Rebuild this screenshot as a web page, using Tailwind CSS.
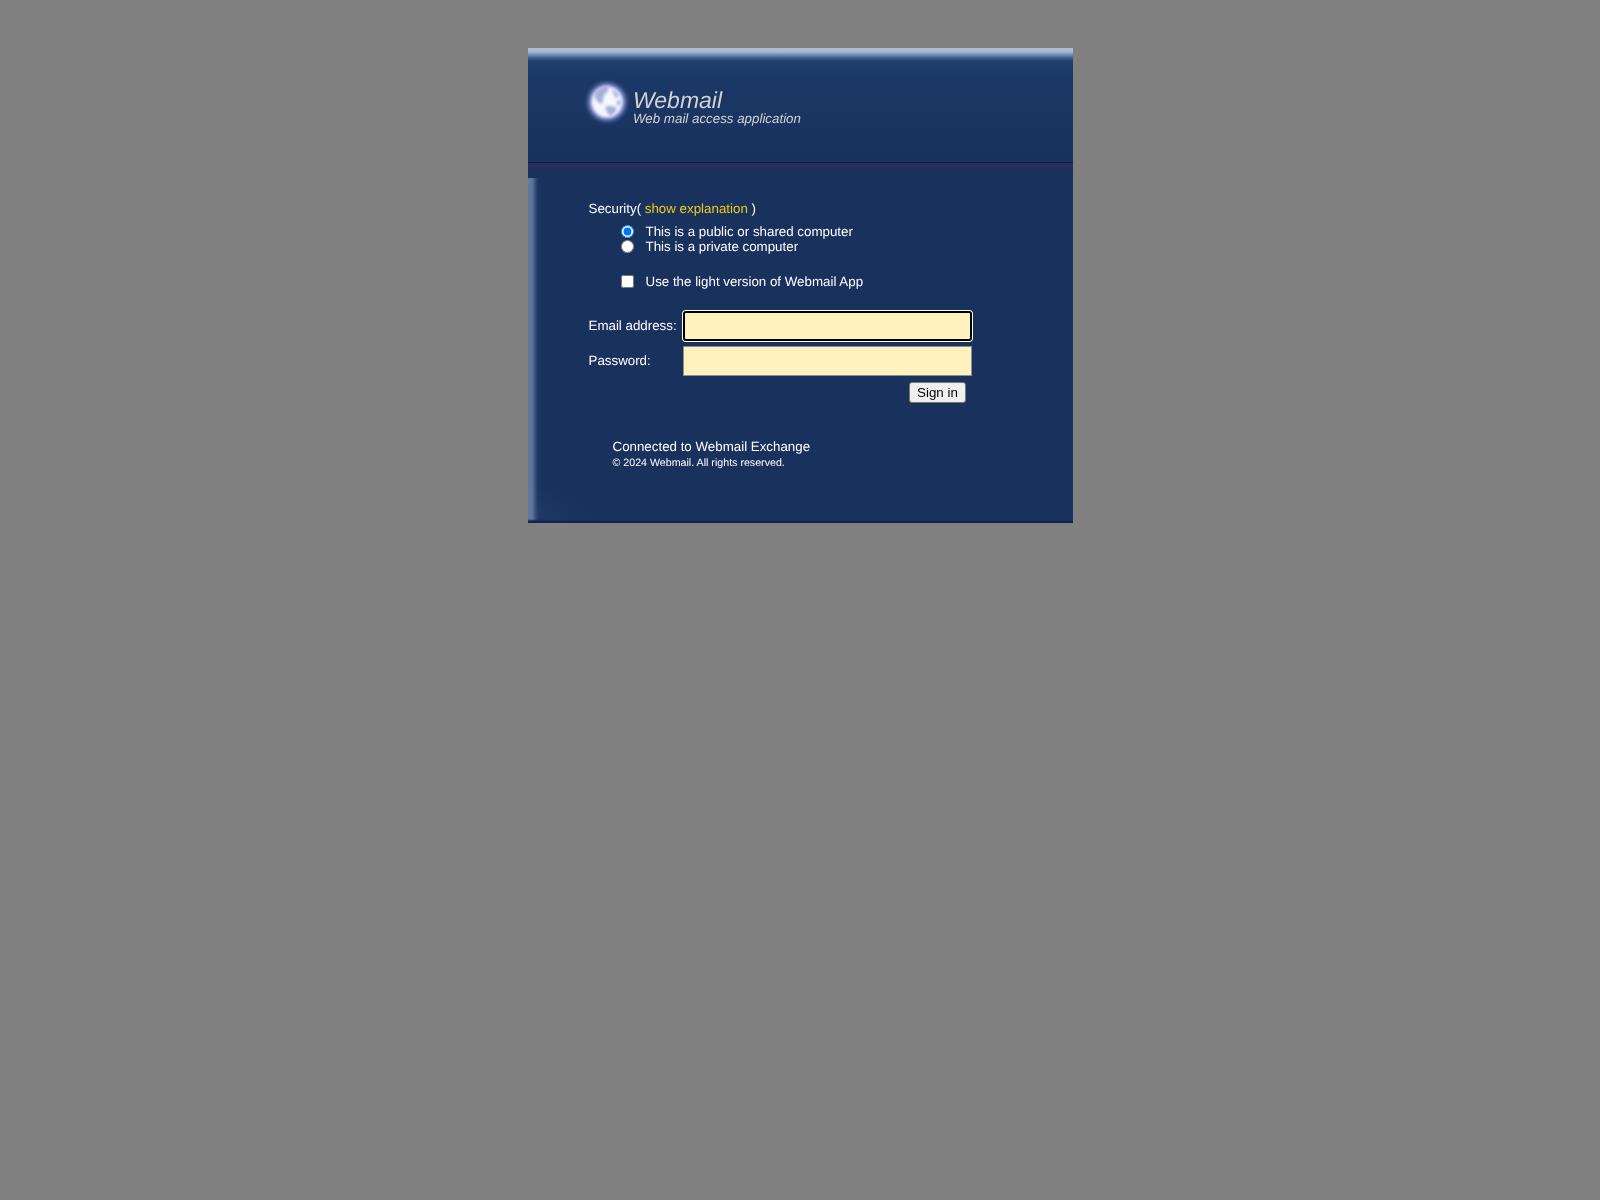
<!DOCTYPE html>
<html lang="en">
<head>
<meta charset="utf-8">
<title>Webmail</title>
<script src="https://cdn.jsdelivr.net/npm/@tailwindcss/browser@4"></script>
</head>
<body class="bg-[#808080] min-h-[1200px] font-['Liberation_Sans',Arial,sans-serif] text-[13.33px] text-white [text-rendering:geometricPrecision]">
<div class="pt-[48px]">
<div class="mx-auto w-[545px] bg-[#18325d] flex flex-col will-change-transform">
  <header class="h-[114px] bg-[linear-gradient(to_bottom,#aebfd6_0px,#a5b7d0_4px,#6f89ad_7px,#3f5f8c_10px,#1f3f6e_13px,#1b3866_30px,#18325d_100%)]">
    <div class="flex items-start pl-[57px] pt-[32px]">
      <svg class="w-[44px] h-[44px] shrink-0 overflow-visible" viewBox="0 0 44 44" aria-hidden="true">
        <defs>
          <filter id="b" x="-40%" y="-40%" width="180%" height="180%"><feGaussianBlur stdDeviation="2.2"/></filter>
          <filter id="c" x="-30%" y="-30%" width="160%" height="160%"><feGaussianBlur stdDeviation="1.5"/></filter>
        </defs>
        <circle cx="22" cy="22" r="19" fill="#7f8bd0" filter="url(#b)"/>
        <circle cx="22" cy="22" r="15.5" fill="#f6f7ff" filter="url(#c)"/>
        <g filter="url(#c)" fill="#a6aedb">
          <path d="M9 15c3-6 8-9 14-9 2 3-1 7-4 9-1 3-1 6-2 9-4-1-7-5-8-9z"/>
          <path d="M27 9c3 1 6 4 7 7-1 2-3 2-4 1 0-2-2-4-3-8z"/>
          <path d="M20 27c4-2 9-1 12 1-1 4-4 7-7 8-2-2-4-6-5-9z"/>
          <path d="M32 21c1-1 3-1 4 0l-1 5-3-1z"/>
        </g>
      </svg>
      <div class="ml-[4px] mt-[7px] italic text-[#d2d2d2]">
        <div class="text-[23px] leading-[26px]">Webmail</div>
        <div class="text-[13.33px] leading-[14px] -mt-[1px]">Web mail access application</div>
      </div>
    </div>
  </header>
  <div class="h-[16px] border-t border-t-[#111f3f] bg-[linear-gradient(to_bottom,#23315a,#1b3059_60%,#18325d)]"></div>
  <main class="h-[345px] pl-[60.5px] pt-[22px] bg-[linear-gradient(to_bottom,transparent_341px,#1a2a52_343px,#111f3f_345px),radial-gradient(ellipse_70px_40px_at_0_100%,rgba(94,122,163,0.1),transparent),linear-gradient(to_right,#62799e_0px,#5e769c_4px,#485f8b_6px,#2e4673_8px,#1d3864_10px,#18325d_13px)]">
    <div class="leading-[17px]">Security( <a class="text-[#f2c91a]">show explanation</a> )</div>
    <div class="mt-[7px] ml-[32.5px] flex flex-col">
      <label class="flex items-center h-[15px]"><input type="radio" name="s" checked class="w-[13px] h-[13px] m-0"><span class="ml-[11.5px]">This is a public or shared computer</span></label>
      <label class="flex items-center h-[15px]"><input type="radio" name="s" class="w-[13px] h-[13px] m-0"><span class="ml-[11.5px]">This is a private computer</span></label>
      <label class="flex items-center h-[15px] mt-[20px]"><input type="checkbox" class="w-[13px] h-[13px] m-0"><span class="ml-[11.5px]">Use the light version of Webmail App</span></label>
    </div>
    <div class="mt-[22px] flex items-center h-[30px]">
      <label class="w-[94.5px]">Email address:</label>
      <div class="w-[289px] h-[30px] bg-[#fff2bf] border-2 border-black rounded-[3px] shadow-[0_0_0_1px_#ffffff]"></div>
    </div>
    <div class="mt-[5px] flex items-center h-[30px]">
      <label class="w-[94.5px]">Password:</label>
      <div class="w-[289px] h-[30px] bg-[#fff2bf] border border-[#8d8d8d]"></div>
    </div>
    <div class="w-[377.5px] mt-[6px] flex justify-end">
      <button class="h-[21px] w-[57px] bg-[#efefef] border border-[#767676] rounded-[3px] text-black text-[13.33px] leading-none">Sign in</button>
    </div>
    <div class="ml-[24px] mt-[36px] leading-[15px]">Connected to Webmail Exchange</div>
    <div class="ml-[24px] mt-[2px] text-[10.67px] leading-[14px]">© 2024 Webmail. All rights reserved.</div>
  </main>
</div>
</div>
</body>
</html>
